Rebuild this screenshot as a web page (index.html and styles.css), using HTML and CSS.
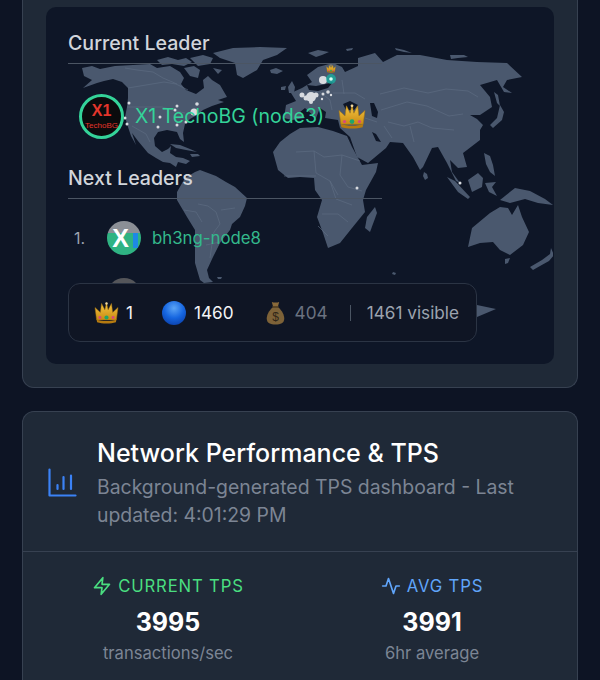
FILE: index.html
```html
<!DOCTYPE html>
<html lang="en">
<head>
  <meta charset="UTF-8" />
  <meta name="viewport" content="width=device-width, initial-scale=1.0" />
  <title>Network Dashboard</title>
  <link rel="stylesheet" href="styles.css">
</head>
<body>

<svg class="defs" width="0" height="0">
  <defs>
    <linearGradient id="gold" x1="0" y1="0" x2="0" y2="1">
      <stop offset="0" stop-color="#f6c945" />
      <stop offset="1" stop-color="#c98a12" />
    </linearGradient>
    <radialGradient id="ball" cx="0.5" cy="0.3" r="0.75">
      <stop offset="0" stop-color="#5ba4f5" />
      <stop offset="0.55" stop-color="#1565e0" />
      <stop offset="1" stop-color="#0b3fa8" />
    </radialGradient>
    <symbol id="crown" viewBox="0 0 30 28">
      <path d="M3 23 1 8l6.500 6L9 3l4 8 2-9 2 9 4-8 1.500 11L29 8l-2 15z" fill="url(#gold)" stroke="#a8730f" stroke-width=".6" />
      <path d="M3 22.500c6 2.500 18 2.500 24 0l-.5 3.500c-6 2-17 2-23 0z" fill="#b57a10" />
      <circle cx="15" cy="20" r="2.500" fill="#1fa56b" />
      <circle cx="7" cy="20" r="1.800" fill="#d9487a" />
      <circle cx="23" cy="20" r="1.800" fill="#d9487a" />
      <circle cx="15" cy="3" r="1.500" fill="#f3d9a0" />
    </symbol>
    <symbol id="bag" viewBox="0 0 20 26">
      <path d="M6 1c2 1 6 1 8 0l-1.500 5.500h-5z" fill="#8a6a3a" />
      <path d="M7 7C3 10 .5 15 .5 19c0 5 4 6.500 9.500 6.500s9.500-1.500 9.500-6.500c0-4-2.500-9-6.500-12z" fill="#7d6238" />
      <rect x="6.500" y="5.500" width="7" height="2" rx="1" fill="#5a4526" />
      <text x="10" y="22" text-anchor="middle" font-size="13" font-family="Liberation Sans, sans-serif" fill="#2f2618">$</text>
    </symbol>
  </defs>
</svg>

<section class="card map-card">
  <div class="map-panel">
    <svg class="world" viewBox="46 7 507 357" aria-hidden="true">
      <g class="land">
        <!-- north america -->
        <path d="M82 68L92 66L100 69L115 66L133 65L150 64L157 68L170 66L180 72L184 78L181 84L186 90L196 94L204 88L203 80L208 76L212 80L220 85L227 97L218 100L224 102L212 106L203 110L197 115L190 119L185 124L183 133L184 142L180 139L177 132L167 130L158 132L154 138L155 146L162 152L168 149L171 146L170 153L176 157L183 158L190 161L186 164L178 162L176 167L170 163L163 162L156 158L148 153L143 147L138 141L132 133L136 145L131 136L128 127L125 117L127 107L128 98L128 88L122 82L113 79L104 81L97 83L83 88L92 80L84 76Z" />
        <path d="M157 60L168 57L178 60L186 58L192 62L184 66L172 64L162 65ZM190 58L203 55L213 58L210 64L198 66ZM184 68L194 66L200 70L198 78L190 76ZM213 68L222 70L218 74Z" />
        <!-- greenland and iceland -->
        <path d="M213 53L233 48L260 47L287 48L277 55L263 60L257 70L243 78L237 75L235 63L220 58Z" />
        <path d="M270 70L276 68L283 71L277 74L271 73Z" />
        <!-- caribbean -->
        <path d="M170 144L180 145L190 149L197 152L186 150L176 148ZM190 154L198 154L200 156L192 157Z" />
        <!-- south america -->
        <path d="M177 192L185 178L195 172L200 170L208 173L216 176L226 182L235 187L247 198L245 206L240 217L232 224L230 230L222 240L220 243L213 257L207 270L209 278L213 282L204 283L200 280L195 263L195 243L195 230L187 217L177 200Z" />
        <path d="M217 277L222 277L221 279L218 279Z" />
        <!-- eurasia -->
        <path d="M302 88L312 82L307 75L318 67L333 63L342 67L345 72L358 66L358 58L375 53L383 62L397 55L420 55L447 60L477 62L507 63L522 77L507 80L503 87L512 93L504 92L497 80L480 85L490 97L492 107L480 115L470 115L477 119L483 125L480 130L480 140L467 150L463 153L467 167L458 168L450 160L452 172L460 183L456 181L447 163L438 147L432 148L423 167L420 170L413 157L403 143L390 142L386 148L368 163L357 157L350 137L340 128L338 120L325 118L326 112L320 108L316 118L305 108L300 112L305 118L292 120L284 118L286 105L296 101L291 93Z" />
        <path d="M308 53L318 50L329 52L322 55L316 57ZM346 49L353 48L352 50L347 51ZM395 48L404 50L412 53L404 52L396 50ZM450 55L464 55L468 57L458 58L451 59Z" />
        <path d="M288 87L292 81L295 87L294 93L289 93ZM281 87L286 86L285 90L281 90Z" />
        <!-- japan, indonesia, philippines -->
        <path d="M494 92L498 95L500 106L497 103ZM500 105L504 112L502 120L493 128L490 125L497 118Z" />
        <path d="M484 153L490 156L493 165L495 176L490 172L486 164ZM447 177L455 181L470 197L468 199L458 192Z" />
        <path d="M468 180L478 173L483 178L482 187L472 192ZM485 183L496 182L492 187L497 196L489 192ZM500 200L515 188L530 191L545 199L553 205L538 203L525 199L510 203Z" />
        <path d="M424 172L427 174L428 178L425 180L423 176Z" />
        <!-- africa -->
        <path d="M273 152L280 142L290 134L300 128L318 127L333 131L347 136L352 147L362 165L378 163L376 172L366 190L363 200L365 212L352 228L340 243L328 248L323 233L317 217L322 200L315 190L314 178L300 177L288 178L278 170Z" />
        <path d="M375 207L377 213L370 232L365 228L367 217Z" />
        <!-- australia and around -->
        <path d="M468 247L472 228L490 213L500 207L508 208L512 215L518 205L522 217L529 232L523 245L510 255L500 250L493 242L480 243Z" />
        <path d="M505 259L510 258L508 263L505 264ZM530 267L542 260L550 254L551 248L554 255L549 261L540 266L533 270Z" />
        <path d="M393 272L396 273L395 275L392 274ZM477 305L496 309L477 317Z" />
      </g>
      <g class="seas">
        <path d="M343 104L350 101L358 105L354 110L346 110ZM370 103L374 103L378 112L377 118L372 116ZM372 132L376 134L381 142L376 141ZM307 85L316 86L326 84L333 82L328 88L318 91L309 90Z" />
      </g>
      <g class="borders">
        <path d="M125 68L137 70L153 72L163 78L177 84M128 88L164 82L176 84L188 90M127 107L162 107L176 111L185 113M132 126L146 134L150 142" />
        <path d="M198 204L208 206L216 212L220 224L214 232L212 244L210 258M184 210L196 212L202 222M206 245L220 242M235 208L221 210" />
        <path d="M296 152L314 151L324 157L342 155L360 161M314 151L316 173L330 181L338 195M284 176L316 176M342 155L340 175L348 187L362 191M330 181L336 199L352 205M322 214L338 214L348 222M318 226L328 236" />
        <path d="M380 94L404 88L428 93L446 89L468 91L478 97M381 110L407 102L427 106L449 116L463 114M388 122L404 126L418 122L432 128L454 130M410 126L414 142M384 126L392 138M365 118L377 122" />
        <path d="M333 93L355 93L365 99M320 92L330 100L332 110M342 80L344 94" />
      </g>
      <g class="dots">
        <circle cx="129" cy="103" r="1.500" /><circle cx="177" cy="106" r="1.500" /><circle cx="197" cy="104" r="1.800" />
        <circle cx="194" cy="112" r="3.500" /><circle cx="175" cy="110" r="1.500" /><circle cx="160" cy="117" r="1.500" />
        <circle cx="125" cy="118" r="1.500" /><circle cx="127" cy="124" r="1.500" /><circle cx="158" cy="127" r="1.500" />
        <circle cx="177" cy="125" r="1.500" /><circle cx="186" cy="122" r="1.500" />
        <circle cx="323" cy="80" r="4" />
        <circle cx="302" cy="95" r="2.500" /><circle cx="306" cy="98" r="2.500" /><circle cx="311" cy="97" r="5" />
        <circle cx="316" cy="95" r="2.500" /><circle cx="311" cy="102" r="2" /><circle cx="323" cy="94" r="1.500" />
        <circle cx="328" cy="92" r="1.800" /><circle cx="331" cy="95" r="1.200" /><circle cx="322" cy="99" r="1.200" />
        <circle cx="357" cy="188" r="1.500" /><circle cx="460" cy="183" r="1.500" />
      </g>
      <circle class="glow" cx="331" cy="79" r="5" />
      <circle class="glow-core" cx="331" cy="79" r="1.800" />
      <use href="#crown" x="326" y="64" width="10" height="9" />
    </svg>

    <div class="leaders">
      <h3 class="leaders-title">Current Leader</h3>
      <div class="current-row">
        <div class="logo-x1">
          <span class="logo-x1-big">X1</span>
          <span class="logo-x1-small">TechoBG</span>
        </div>
        <span class="current-name">X1 TechoBG (node3)</span>
        <svg class="current-crown"><use href="#crown" /></svg>
      </div>

      <h3 class="leaders-title next-title">Next Leaders</h3>
      <div class="next-row">
        <span class="next-num">1.</span>
        <div class="logo-xn"><span>X</span><i></i></div>
        <span class="next-name">bh3ng-node8</span>
      </div>
      <div class="next-row next-row-hidden">
        <span class="next-num"></span>
        <div class="logo-gray"></div>
      </div>
    </div>

    <div class="legend">
      <span class="legend-item">
        <svg class="legend-crown"><use href="#crown" /></svg>1
      </span>
      <span class="legend-item">
        <svg class="legend-ball" viewBox="0 0 24 24"><circle cx="12" cy="12" r="12" fill="url(#ball)" /></svg>1460
      </span>
      <span class="legend-item legend-dim">
        <svg class="legend-bag"><use href="#bag" /></svg>404
      </span>
      <span class="legend-sep"></span>
      <span class="legend-total">1461 visible</span>
    </div>
  </div>
</section>

<section class="card perf-card">
  <header class="perf-head">
    <svg class="perf-icon" viewBox="0 0 29 29" fill="none" stroke="currentColor" stroke-width="2.200" stroke-linecap="round" stroke-linejoin="round">
      <path d="M1.500 1.500v26h26" />
      <path d="M9.500 17v4M15.500 9v12M23 7.500V21" />
    </svg>
    <div>
      <h2 class="perf-title">Network Performance &amp; TPS</h2>
      <p class="perf-sub">Background-generated TPS dashboard - Last updated: 4:01:29 PM</p>
    </div>
  </header>
  <div class="stats">
    <div class="stat">
      <div class="stat-label label-green">
        <svg viewBox="0 0 24 24" fill="none" stroke="currentColor" stroke-width="2" stroke-linecap="round" stroke-linejoin="round"><path d="M13 2 3 14h9l-1 8 10-12h-9z" /></svg>
        CURRENT TPS
      </div>
      <div class="stat-value">3995</div>
      <div class="stat-sub">transactions/sec</div>
    </div>
    <div class="stat">
      <div class="stat-label label-blue">
        <svg viewBox="0 0 24 24" fill="none" stroke="currentColor" stroke-width="2" stroke-linecap="round" stroke-linejoin="round"><path d="M22 12h-4l-3 9L9 3l-3 9H2" /></svg>
        AVG TPS
      </div>
      <div class="stat-value">3991</div>
      <div class="stat-sub">6hr average</div>
    </div>
  </div>
</section>

</body>
</html>
```

FILE: styles.css
```css
* {
  box-sizing: border-box;
}

html,
body {
  height: 680px;
  overflow: hidden;
}

body {
  margin: 0;
  padding: 0 22px;
  font-family: Inter, "Liberation Sans", sans-serif;
  background-color: #0d1424;
  color: #fff;
}

.defs {
  position: absolute;
}

.card {
  background-color: #1f2937;
  border: 1px solid #374151;
  border-radius: 12px;
}

.map-card {
  height: 388px;
  padding: 7px 23px 0;
  border-top: none;
  border-radius: 0 0 12px 12px;
}

.map-panel {
  position: relative;
  height: 357px;
  background-color: #0e1627;
  border-radius: 10px;
  overflow: hidden;
}

.world {
  position: absolute;
  left: 0;
  top: 0;
  width: 507px;
  height: 357px;
}

.land path {
  fill: #4a586e;
}

.seas path {
  fill: #0e1627;
}

.borders path {
  fill: none;
  stroke: #5f6e85;
  stroke-width: 0.6;
}

.dots circle {
  fill: #d8dbe0;
}

.glow {
  fill: #14b8a6;
  opacity: 0.7;
}

.glow-core {
  fill: #d9fff5;
}

.leaders {
  position: relative;
  width: 336px;
  height: 100%;
  padding: 25px 0 0 22px;
}

.leaders-title {
  margin: 0;
  padding-bottom: 8px;
  font-size: 19.6px;
  line-height: 23px;
  font-weight: 500;
  color: #d1d5db;
  border-bottom: 1px solid #4b5563;
}

.current-row {
  display: flex;
  align-items: center;
  height: 104px;
  padding-left: 11px;
}

.logo-x1 {
  display: flex;
  flex-direction: column;
  align-items: center;
  justify-content: center;
  gap: 1px;
  flex: none;
  width: 45px;
  height: 45px;
  margin-right: 11px;
  border: 3px solid #34d399;
  border-radius: 50%;
  background-color: #0b0b0d;
  color: #e5352b;
  font-family: "Liberation Sans", sans-serif;
  font-weight: 700;
}

.logo-x1-big {
  font-size: 16px;
  line-height: 18px;
}

.logo-x1-small {
  font-size: 8px;
  line-height: 9px;
  font-weight: 400;
}

.current-name {
  flex: none;
  font-size: 19.5px;
  color: #34d399;
}

.current-crown {
  flex: none;
  width: 30px;
  height: 26px;
  margin-left: 13px;
}

.next-title {
  margin-top: -1px;
}

.next-row {
  display: flex;
  align-items: center;
  height: 54px;
  margin-top: 12px;
  padding-left: 6px;
}

.next-row-hidden {
  margin-top: 3px;
}

.next-num {
  width: 33px;
  flex: none;
  font-size: 16px;
  color: #9ca3af;
}

.logo-xn {
  position: relative;
  flex: none;
  width: 34px;
  height: 34px;
  margin-right: 11px;
  border-radius: 50%;
  overflow: hidden;
  background: linear-gradient(#8b8f96 0 35%, #2fb383 35%);
  display: flex;
  align-items: center;
  justify-content: center;
}

.logo-xn span {
  font-family: "Liberation Sans", sans-serif;
  font-size: 25px;
  font-weight: 700;
  color: #fff;
  margin-right: 7px;
}

.logo-xn i {
  position: absolute;
  right: 3px;
  top: 12px;
  width: 5px;
  height: 15px;
  background-color: #1e88e5;
}

.logo-gray {
  flex: none;
  width: 34px;
  height: 34px;
  border-radius: 50%;
  background-color: #55565a;
}

.next-name {
  font-size: 16.8px;
  color: #34b98c;
}

.legend {
  position: absolute;
  left: 22px;
  top: 276px;
  display: flex;
  align-items: center;
  width: 409px;
  height: 59px;
  padding-left: 25px;
  background-color: #0f1524;
  border: 1px solid #2b3444;
  border-radius: 12px;
  font-size: 17.200px;
  line-height: 20px;
}

.legend-item {
  display: flex;
  align-items: center;
  color: #f3f4f6;
}

.legend-crown {
  width: 25px;
  height: 23px;
  margin-right: 7px;
}

.legend-ball {
  width: 24px;
  height: 24px;
  margin: 0 8px 0 29px;
}

.legend-bag {
  width: 19px;
  height: 24px;
  margin: 0 10px 0 32px;
}

.legend-dim {
  color: #6b7280;
}

.legend-sep {
  width: 1px;
  height: 16px;
  margin: 0 16px 0 22px;
  background-color: #4b5563;
}

.legend-total {
  color: #9ca3af;
}

.perf-card {
  height: 269px;
  margin-top: 23px;
  border-bottom: none;
  border-radius: 12px 12px 0 0;
}

.perf-head {
  display: flex;
  align-items: center;
  gap: 20px;
  height: 140px;
  padding: 2px 25px 0;
  border-bottom: 1px solid #374151;
}

.perf-icon {
  flex: none;
  width: 29px;
  height: 29px;
  color: #3b82f6;
}

.perf-title {
  margin: 0 0 4px;
  font-size: 25px;
  line-height: 32px;
  font-weight: 500;
}

.perf-sub {
  margin: 0;
  font-size: 19.4px;
  line-height: 28px;
  color: #7c8594;
}

.stats {
  display: grid;
  grid-template-columns: 1fr 1fr;
  gap: 24px;
  padding: 24px 25px 0;
}

.stat {
  text-align: center;
}

.stat-label {
  display: flex;
  align-items: center;
  justify-content: center;
  gap: 6px;
  height: 20px;
  font-size: 16.7px;
  letter-spacing: 0.05em;
}

.stat-label svg {
  width: 20px;
  height: 20px;
}

.label-green {
  color: #4ade80;
}

.label-blue {
  color: #60a5fa;
}

.stat-value {
  margin-top: 10px;
  font-size: 25px;
  line-height: 32px;
  font-weight: 700;
}

.stat-sub {
  margin-top: 3px;
  font-size: 16.6px;
  line-height: 24px;
  color: #7c8594;
}
```
